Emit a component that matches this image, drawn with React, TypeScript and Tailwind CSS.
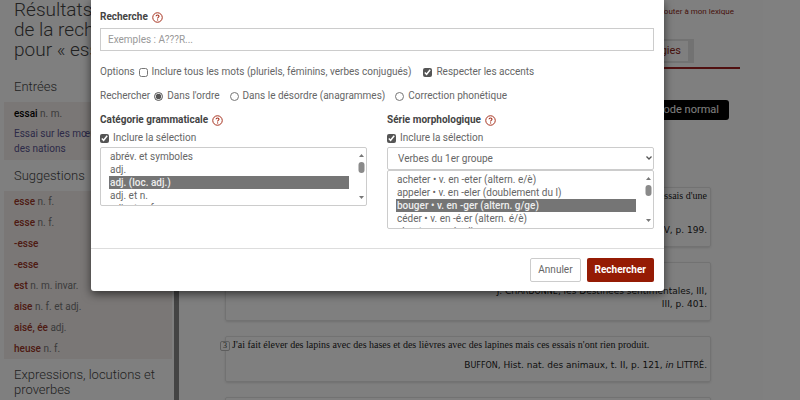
import type { ReactNode } from 'react';

interface Entry {
  word: string;
  kind?: string;
}

const suggestions: Entry[] = [
  { word: 'esse', kind: 'n. f.' },
  { word: 'esse', kind: 'n. f.' },
  { word: '-esse' },
  { word: '-esse' },
  { word: 'est', kind: 'n. m. invar.' },
  { word: 'aise', kind: 'n. f. et adj.' },
  { word: 'aisé, ée', kind: 'adj.' },
  { word: 'heuse', kind: 'n. f.' },
];

const categories = ['abrév. et symboles', 'adj.', 'adj. (loc. adj.)', 'adj. et n.', 'adj. et n. f.'];

const series = [
  'acheter • v. en -eter (altern. e/è)',
  'appeler • v. en -eler (doublement du l)',
  'bouger • v. en -ger (altern. g/ge)',
  'céder • v. en -é.er (altern. é/è)',
  'chanter • v. régulier',
];

function HelpIcon() {
  return (
    <svg className="size-[11px] text-[#a5301d]" viewBox="0 0 22 22" fill="none" stroke="currentColor" aria-hidden="true">
      <circle cx="11" cy="11" r="9.5" strokeWidth="2" />
      <path d="M8 8.6C8.2 6.8 9.4 6 11 6c1.800 0 3 1 3 2.500 0 2.200-2.900 2.200-2.900 4.300" strokeWidth="2.200" />
      <path d="M11.100 14.800v2.200" strokeWidth="2.400" />
    </svg>
  );
}

function SidebarTitle({ children }: { children: ReactNode }) {
  return <h2 className="py-2 pl-[14px] text-[13px] leading-[15px] font-light text-[#444]">{children}</h2>;
}

function Sidebar() {
  return (
    <aside className="w-[179px] shrink-0 border-r-[5px] border-[#888] pr-[2px]">
      <h1 className="pl-[14px] text-[19px] leading-[20px] font-light text-[#444]">
        Résultats
        <br />
        de la recherche
        <br />
        pour « essai »
      </h1>
      <div className="pt-[11px]">
        <SidebarTitle>Entrées</SidebarTitle>
      </div>
      <div className="ml-1 bg-[#f4eeed] px-[10px] py-1 text-[10px]">
        <a href="#essai" className="block leading-4 text-[#777]">
          <span className="font-medium text-black">essai</span> n. m.
        </a>
        <a href="#moeurs" className="mt-1 block leading-[15px] text-[#5a5590]">
          Essai sur les mœurs et l'esprit des nations
        </a>
      </div>
      <SidebarTitle>Suggestions</SidebarTitle>
      <ul className="ml-1 bg-[#f4eeed] px-[10px] text-[10px] leading-[21px]">
        {suggestions.map((entry, index) => (
          <li key={index}>
            <a href={`#suggestion-${index}`} className="text-[#777]">
              <span className="font-medium text-[#9c3626]">{entry.word}</span> {entry.kind}
            </a>
          </li>
        ))}
      </ul>
      <SidebarTitle>Expressions, locutions et proverbes</SidebarTitle>
    </aside>
  );
}

function Source({ children }: { children: ReactNode }) {
  return (
    <p className="text-right font-['Verdana','DejaVu_Sans',sans-serif] text-[9px] leading-[13px] text-[#222]">
      {children}
    </p>
  );
}

function Content() {
  return (
    <main className="min-w-0 flex-1 pr-[60px] pl-[46px]">
      <div className="pt-[6px] pr-[6px] text-right">
        <a href="#lexique" className="block text-[8px] leading-3 text-[#8f2717]">
          Ajouter à mon lexique
        </a>
      </div>
      <nav className="mt-[21px] flex justify-end border-b-2 border-[#a02020] pr-[46px] pb-1">
        <a href="#analogies" className="border-2 border-r-[6px] border-[#e4e4e4] px-[7px] text-[11px] leading-5 text-[#8f2717]">
          Analogies
        </a>
      </nav>
      <div className="mt-[31px] flex justify-end pr-[11px]">
        <button type="button" className="h-5 rounded-[3px] bg-black px-[10px] text-[11px] text-white">
          Passer en mode normal
        </button>
      </div>
      <div className="mt-[67px] mr-[29px] flex flex-col gap-[15px] font-['Liberation_Serif',serif] text-[10px] leading-4 text-[#222]">
        <article className="rounded-xs border border-[#e4e4e4] px-[3px] pb-[9px] shadow-sm">
          <p className="pb-5 text-right">essais d'une</p>
          <Source>IV, p. 199.</Source>
        </article>
        <article className="rounded-xs border border-[#e4e4e4] px-[3px] pt-[22px] pb-[9px] shadow-sm">
          <Source>
            J. C<span className="text-[8px]">HARDONNE</span>, les Destinées sentimentales, III,
            <br />
            III, p. 401.
          </Source>
        </article>
        <article className="relative rounded-xs border border-[#e4e4e4] px-[3px] pb-[9px] shadow-sm">
          <span className="absolute top-1 -left-[6px] rounded-xs border border-[#bbb] bg-white px-[2px] text-[8px] leading-2 text-[#444]">
            3
          </span>
          <p className="pb-[6px] pl-[3px]">
            J'ai fait élever des lapins avec des hases et des lièvres avec des lapines mais ces essais n'ont rien produit.
          </p>
          <Source>
            B<span className="text-[8px]">UFFON</span>, Hist. nat. des animaux, t. II, p. 121, <i>in</i> L
            <span className="text-[8px]">ITTRÉ</span>.
          </Source>
        </article>
        <article className="h-5 rounded-xs border border-[#e4e4e4] shadow-sm" />
      </div>
    </main>
  );
}

interface ListBoxProps {
  label: string;
  options: string[];
  selected: string;
}

function ListBox({ label, options, selected }: ListBoxProps) {
  return (
    <div className="relative">
      <select
        multiple
        aria-label={label}
        defaultValue={[selected]}
        className="block h-[59px] w-full overflow-hidden rounded-xs border border-[#ccc] py-[2px] pr-[17px] pl-2 text-[10px] text-[#666] [scrollbar-width:none]"
      >
        {options.map((option) => (
          <option
            key={option}
            className="h-[13px] min-h-0 px-px py-px checked:bg-[linear-gradient(#757575,#757575)] checked:font-medium checked:[-webkit-text-fill-color:#eee]"
          >
            {option}
          </option>
        ))}
      </select>
      <svg className="absolute top-[6px] right-[2px] h-[47px] w-[7px]" viewBox="0 0 7 47" aria-hidden="true">
        <path d="M1 4 3.500 1 6 4Z" fill="#777" />
        <rect x="0.500" y="9" width="6" height="11" rx="3" fill="#8a8a8a" />
        <path d="M1 43 3.500 46 6 43Z" fill="#777" />
      </svg>
    </div>
  );
}

function FieldTitle({ children }: { children: ReactNode }) {
  return (
    <h3 className="flex items-center gap-1 text-[10px] leading-4 font-bold text-[#444]">
      {children}
      <HelpIcon />
    </h3>
  );
}

interface ChoiceProps {
  type: 'checkbox' | 'radio';
  name?: string;
  checked?: boolean;
  children: ReactNode;
}

function Choice({ type, name, checked, children }: ChoiceProps) {
  return (
    <label className="flex items-center gap-1">
      <input type={type} name={name} defaultChecked={checked} className="size-[9px] accent-[#555]" />
      {children}
    </label>
  );
}

function SearchModal() {
  return (
    <div className="absolute inset-0 flex items-start justify-center bg-black/50 pr-[45px]">
      <form
        role="dialog"
        aria-label="Recherche"
        className="w-full max-w-[573px] rounded-b-[3px] bg-white text-[10px] leading-4 text-[#666] shadow-[0_3px_10px_rgba(0,0,0,0.6)]"
      >
        <div className="pt-[9px] pr-[10px] pb-[19px] pl-[9px]">
          <FieldTitle>
            <label htmlFor="query">Recherche</label>
          </FieldTitle>
          <input
            id="query"
            type="text"
            placeholder="Exemples : A???R..."
            className="mt-[3px] block h-[23px] w-full border border-[#ccc] px-[7px] text-[10px] placeholder:text-[#999]"
          />
          <div className="mt-[13px] flex items-center gap-3">
            <div className="flex items-center gap-1">
              <span>Options</span>
              <Choice type="checkbox">Inclure tous les mots (pluriels, féminins, verbes conjugués)</Choice>
            </div>
            <Choice type="checkbox" checked>
              Respecter les accents
            </Choice>
          </div>
          <div className="mt-2 flex items-center gap-[10px]">
            <div className="flex items-center gap-1">
              <span>Rechercher</span>
              <Choice type="radio" name="mode" checked>
                Dans l'ordre
              </Choice>
            </div>
            <Choice type="radio" name="mode">Dans le désordre (anagrammes)</Choice>
            <Choice type="radio" name="mode">Correction phonétique</Choice>
          </div>
          <div className="mt-2 grid grid-cols-2 gap-5">
            <section>
              <FieldTitle>Catégorie grammaticale</FieldTitle>
              <div className="pt-[2px] pb-px">
                <Choice type="checkbox" checked>
                  Inclure la sélection
                </Choice>
              </div>
              <ListBox label="Catégorie grammaticale" options={categories} selected="adj. (loc. adj.)" />
            </section>
            <section>
              <FieldTitle>Série morphologique</FieldTitle>
              <div className="pt-[2px] pb-px">
                <Choice type="checkbox" checked>
                  Inclure la sélection
                </Choice>
              </div>
              <div className="relative">
                <select
                  aria-label="Groupe"
                  className="block h-[23px] w-full appearance-none rounded-xs border border-[#ccc] bg-white px-[10px] text-[10px]"
                >
                  <option>Verbes du 1er groupe</option>
                </select>
                <svg className="pointer-events-none absolute top-[9px] right-[2px] h-1 w-[6px]" viewBox="0 0 6 4" fill="none" stroke="#555" strokeWidth="1.300" aria-hidden="true">
                  <path d="m.5.5L3 3 5.500.5" />
                </svg>
              </div>
              <ListBox
                label="Série morphologique"
                options={series}
                selected="bouger • v. en -ger (altern. g/ge)"
              />
            </section>
          </div>
        </div>
        <footer className="flex justify-end gap-[6px] border-t border-[#ddd] py-[9px] pr-[10px] pl-[9px]">
          <button type="button" className="h-6 rounded-xs border border-[#ccc] bg-white px-[7px]">
            Annuler
          </button>
          <button type="submit" className="h-6 rounded-xs bg-[#951b04] px-2 font-bold text-white">
            Rechercher
          </button>
        </footer>
      </form>
    </div>
  );
}

export default function App() {
  return (
    <div className="relative flex h-screen overflow-hidden bg-white font-['Roboto',sans-serif]">
      <Sidebar />
      <Content />
      <SearchModal />
    </div>
  );
}
